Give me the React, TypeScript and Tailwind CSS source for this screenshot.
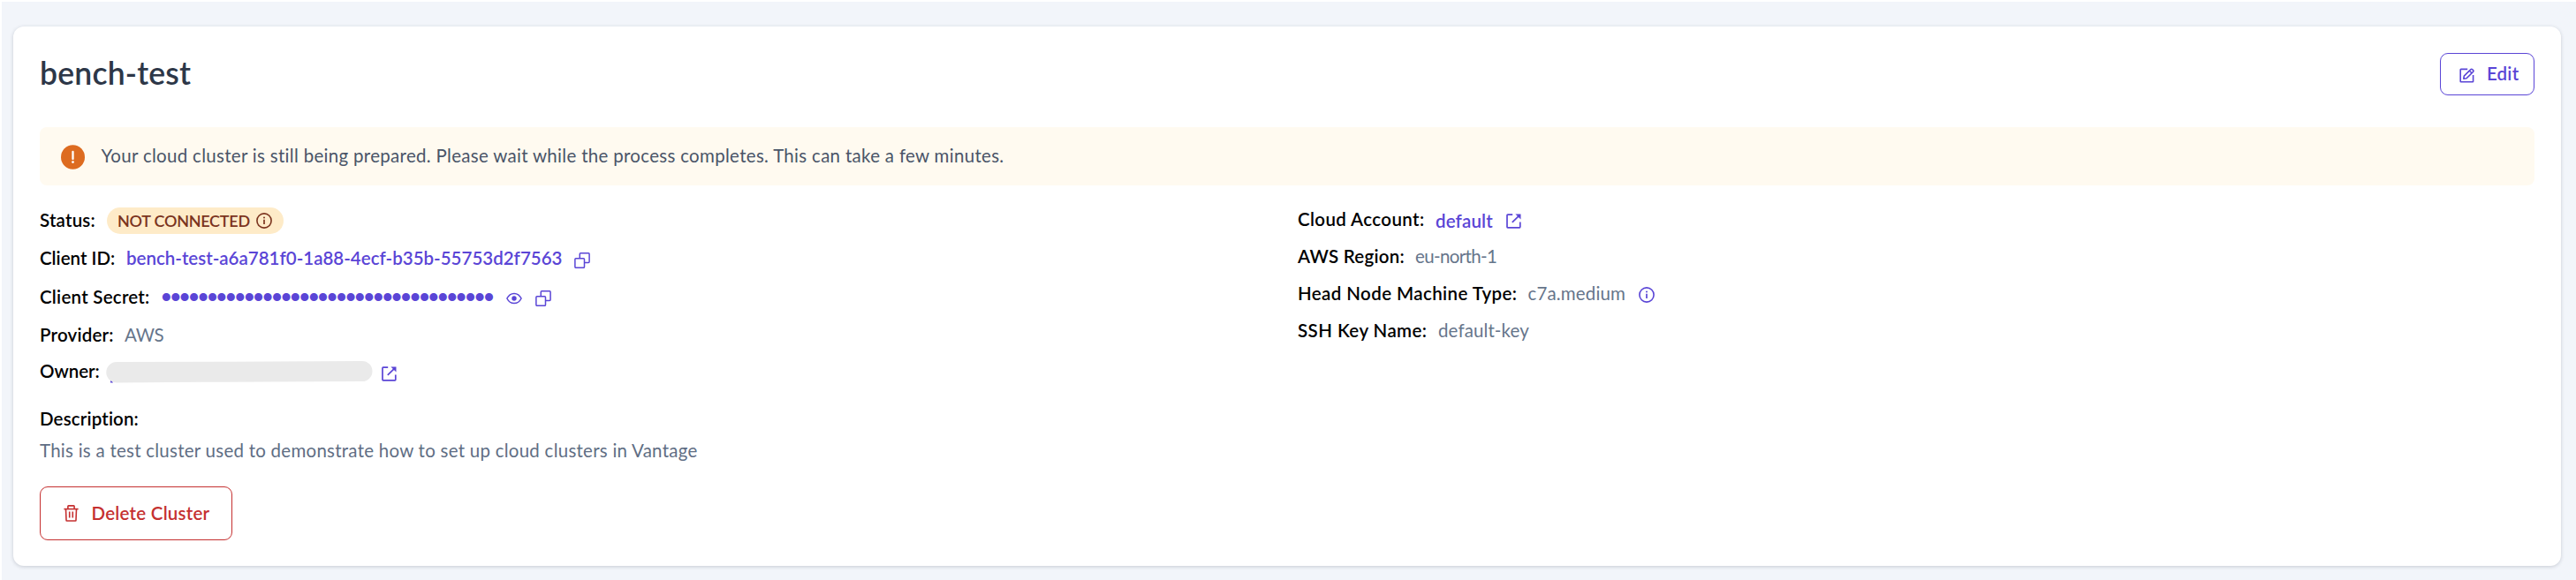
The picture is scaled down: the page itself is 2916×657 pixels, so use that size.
import React from "react";

type IconProps = { className?: string };

function EditIcon({ className = "" }: IconProps) {
  return (
    <svg className={className} width="17" height="17" viewBox="0 0 17 17" fill="none" stroke="currentColor" strokeWidth="1.6" strokeLinejoin="round">
      <path d="M9.2 1.4H1.8a.6.6 0 0 0-.6.6v13.2c0 .3.3.6.6.6H15c.3 0 .6-.3.6-.6V8" />
      <path d="M4.8 12.2l.5-3.1 7.4-7.3a1.5 1.5 0 0 1 2.1 0l.6.6a1.5 1.5 0 0 1 0 2.1L8 11.8l-3.2.4zM11.4 3.2l2.6 2.6" />
    </svg>
  );
}

function CopyIcon({ className = "" }: IconProps) {
  return (
    <svg className={className} width="18" height="18" viewBox="0 0 18 18" fill="none" stroke="currentColor" strokeWidth="1.5">
      <rect x="0.9" y="6.7" width="10.6" height="10.6" rx="1" />
      <path d="M6.3 6.5V1.7c0-.5.4-.9.9-.9h9c.5 0 .9.4.9.9v8.9c0 .5-.4.9-.9.9h-4.6" />
    </svg>
  );
}

function EyeIcon({ className = "" }: IconProps) {
  return (
    <svg className={className} width="18" height="14" viewBox="0 0 18 14" fill="none" stroke="currentColor" strokeWidth="1.5">
      <path d="M.9 7C2.8 3.2 5.6 1.4 9 1.4S15.2 3.2 17.1 7C15.2 10.8 12.400 12.600 9 12.600S2.800 10.800.9 7z" />
      <circle cx="9" cy="7" r="2.7" fill="currentColor" stroke="none" />
    </svg>
  );
}

function ExternalIcon({ className = "" }: IconProps) {
  return (
    <svg className={className} width="17" height="17" viewBox="0 0 17 17" fill="none" stroke="currentColor" strokeWidth="1.7">
      <path d="M7.2 1.2H1.7a.7.7 0 0 0-.7.7v13.2c0 .4.3.7.7.7h13.4c.4 0 .7-.3.7-.7V9.6" />
      <path d="M6.8 9.9L14 2.9" />
      <path d="M10.4.5h6.100v6.100z" fill="currentColor" stroke="none" />
    </svg>
  );
}

function InfoIcon({ className = "" }: IconProps) {
  return (
    <svg className={className} width="18" height="18" viewBox="0 0 18 18" fill="none" stroke="currentColor" strokeWidth="1.6">
      <circle cx="9" cy="9" r="8.1" />
      <path d="M9 7.8v5.2" strokeWidth="1.7" />
      <circle cx="9" cy="5.5" r="1" fill="currentColor" stroke="none" />
    </svg>
  );
}

function TrashIcon({ className = "" }: IconProps) {
  return (
    <svg className={className} width="17" height="19" viewBox="0 0 17 19" fill="none" stroke="currentColor" strokeWidth="1.6">
      <path d="M.4 4.6h16.2" />
      <path d="M4.9 4.4V1.6c0-.4.3-.7.7-.7h5.8c.4 0 .7.3.7.7v2.8" />
      <path d="M2.5 4.8l.5 12.5c0 .4.3.7.7.7h9.6c.4 0 .7-.3.7-.7l.5-12.5" />
      <path d="M6.7 7.6v7M10.3 7.6v7" />
    </svg>
  );
}

export default function App() {
  return (
    <div className="h-[657px] w-[2916px] overflow-hidden border-t-2 border-l-2 border-white bg-[#f2f5fa] pt-[28px] pl-[13px] font-['Lato','Open_Sans',sans-serif] text-[20.5px] leading-6 whitespace-nowrap">
      <main className="h-[611px] w-[2884px] rounded-xl bg-white pr-[30px] pl-[30px] shadow-[0_1px_4px_rgba(30,41,59,0.2)]">
        <header className="flex h-[114px] items-start justify-between pt-[30px]">
          <h1 className="pt-0.5 text-[35.5px] leading-[42px] font-semibold tracking-[0.2px] text-[#2d3748]">bench-test</h1>
          <button className="flex h-12 w-[107px] items-center rounded-[9px] border border-[#5a45d6] pl-[21px] font-semibold text-[#5a45d6]">
            <EditIcon className="mt-0.5" />
            <span className="mb-0.5 ml-3.5 tracking-[0.2px]">Edit</span>
          </button>
        </header>

        <div className="flex h-[66px] items-center rounded-lg bg-[#fffaf0] pl-6 text-[#4a5568]">
          <svg className="mt-0.5" width="27" height="28" viewBox="0 0 27 28">
            <ellipse cx="13.5" cy="14" rx="13.5" ry="13.8" fill="#dd6b20" />
            <path d="M13.5 8v8" stroke="#fff" strokeWidth="2.3" strokeLinecap="round" />
            <circle cx="13.5" cy="19.6" r="1.4" fill="#fff" />
          </svg>
          <p className="mb-0.5 ml-[18.5px] tracking-[0.3px]">
            Your cloud cluster is still being prepared. Please wait while the process completes. This can take a few minutes.
          </p>
        </div>

        <section className="flex pt-[17px]">
          <div className="w-[1424px] text-black">
            <div className="flex h-[44px] items-center pb-px">
              <span className="w-[76px] font-semibold tracking-[0.2px]">Status:</span>
              <span className="mt-0.5 flex h-[30px] w-[200px] items-center rounded-full bg-[#feebc8] pl-3 text-[18px] font-semibold text-[#7b341e]">
                <span className="w-[157px] tracking-[-0.25px]">NOT CONNECTED</span>
                <InfoIcon />
              </span>
            </div>
            <div className="flex h-[42px] items-center text-[#5a45d6]">
              <span className="w-[98px] font-semibold tracking-[0px] text-black">Client ID:</span>
              <span className="w-[507px] font-semibold tracking-[0px]">bench-test-a6a781f0-1a88-4ecf-b35b-55753d2f7563</span>
              <CopyIcon className="mt-[5px]" />
            </div>
            <div className="flex h-[45px] items-center text-[#5a45d6]">
              <span className="w-[137.5px] font-semibold tracking-[0.25px] text-black">Client Secret:</span>
              <span className="mt-0.5 w-[390px] font-['Liberation_Sans',sans-serif] text-[33px] leading-6 tracking-[-1.12px]">••••••••••••••••••••••••••••••••••••</span>
              <EyeIcon className="mt-1" />
              <CopyIcon className="mt-1 ml-[15px]" />
            </div>
            <div className="flex h-[41px] items-center">
              <span className="w-[96px] font-semibold tracking-[0.2px]">Provider:</span>
              <span className="tracking-[-0.3px] text-[#66758b]">AWS</span>
            </div>
            <div className="flex h-[41px] items-center">
              <span className="w-[75px] font-semibold tracking-[-0.05px]">Owner:</span>
              <svg className="mt-[3px]" width="303" height="26" viewBox="0 0 303 26">
                <path d="M5 20v5.5h3" fill="#5a45d6" />
                <path d="M12 2L190 1.5L290 1A11.5 11.5 0 0 1 290 24L110 24.8L12 25.5A11.75 11.75 0 0 1 12 2z" fill="#eaeaea" />
              </svg>
              <ExternalIcon className="mt-[7px] ml-[9px] text-[#5a45d6]" />
            </div>
            <h2 className="mt-[22px] font-semibold tracking-[0.15px]">Description:</h2>
            <p className="mt-3 tracking-[0.25px] text-[#5f6e84]">This is a test cluster used to demonstrate how to set up cloud clusters in Vantage</p>
            <button className="mt-[29px] flex h-[61px] w-[218px] items-center rounded-[9px] border border-[#c53030] pl-[26px] font-semibold text-[#c53030]">
              <TrashIcon />
              <span className="mb-px ml-[14.5px] tracking-[0.25px]">Delete Cluster</span>
            </button>
          </div>

          <div className="text-black">
            <div className="flex h-[42px] items-center">
              <span className="w-[156px] font-semibold tracking-[0.38px]">Cloud Account:</span>
              <span className="mt-1 w-[80px] font-semibold tracking-[0.15px] text-[#5a45d6]">default</span>
              <ExternalIcon className="mt-[5px] text-[#5a45d6]" />
            </div>
            <div className="flex h-[42px] items-center">
              <span className="w-[133px] font-semibold tracking-[0.25px]">AWS Region:</span>
              <span className="tracking-[-0.65px] text-[#66758b]">eu-north-1</span>
            </div>
            <div className="flex h-[42px] items-center">
              <span className="w-[260.5px] font-semibold tracking-[0.4px]">Head Node Machine Type:</span>
              <span className="w-[125px] tracking-[0.15px] text-[#66758b]">c7a.medium</span>
              <InfoIcon className="mt-1 text-[#5a45d6]" />
            </div>
            <div className="flex h-[42px] items-center">
              <span className="w-[159px] font-semibold tracking-[0.42px]">SSH Key Name:</span>
              <span className="tracking-[0.1px] text-[#66758b]">default-key</span>
            </div>
          </div>
        </section>
      </main>
    </div>
  );
}
